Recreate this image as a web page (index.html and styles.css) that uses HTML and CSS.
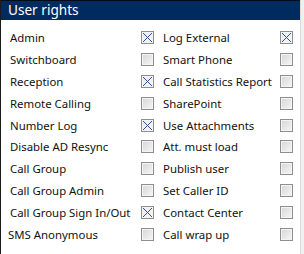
FILE: index.html
```html
<!DOCTYPE html>
<html lang="en">
<head>
    <meta charset="UTF-8">
    <title>User rights</title>
    <link rel="stylesheet" href="styles.css">
</head>
<body>
    <div class="window">
        <div class="panel">
            <div class="panel-header">User rights</div>
            <div class="rights">
                <span class="label">Admin</span><span class="box checked"></span>
                <span class="label right">Log External</span><span class="box checked"></span>

                <span class="label">Switchboard</span><span class="box"></span>
                <span class="label right">Smart Phone</span><span class="box"></span>

                <span class="label">Reception</span><span class="box checked"></span>
                <span class="label right">Call Statistics Report</span><span class="box"></span>

                <span class="label">Remote Calling</span><span class="box"></span>
                <span class="label right">SharePoint</span><span class="box"></span>

                <span class="label">Number Log</span><span class="box checked"></span>
                <span class="label right">Use Attachments</span><span class="box"></span>

                <span class="label">Disable AD Resync</span><span class="box"></span>
                <span class="label right">Att. must load</span><span class="box"></span>

                <span class="label">Call Group</span><span class="box"></span>
                <span class="label right">Publish user</span><span class="box"></span>

                <span class="label">Call Group Admin</span><span class="box"></span>
                <span class="label right">Set Caller ID</span><span class="box"></span>

                <span class="label">Call Group Sign In/Out</span><span class="box checked"></span>
                <span class="label right">Contact Center</span><span class="box"></span>

                <span class="label sms">SMS Anonymous</span><span class="box"></span>
                <span class="label right">Call wrap up</span><span class="box"></span>
            </div>
        </div>
        <div class="edge"></div>
    </div>
</body>
</html>
```

FILE: styles.css
```css
body {
    margin: 0;
    font-family: "Noto Sans", "Open Sans", sans-serif;
    background: #fff;
}

.window {
    display: flex;
    width: 304px;
    height: 254px;
    overflow: hidden;
}

.panel {
    width: 300px;
    border-left: 1px solid #1a1a1a;
    box-sizing: border-box;
}

.panel-header {
    height: 20px;
    background: #002b5e;
    border-top: 1px solid #000c1e;
    box-sizing: border-box;
    color: #fff;
    font-size: 13.6px;
    line-height: 17px;
    padding-left: 7px;
}

.rights {
    display: grid;
    grid-template-columns: 131px 21px 118px 13px;
    grid-auto-rows: 21.8px;
    align-items: center;
    padding: 7px 0 0 9px;
}

.label {
    font-size: 11.4px;
    color: #111;
    white-space: nowrap;
}

.label.right {
    padding-left: 1px;
}

.label.sms {
    margin-left: -2px;
}

.box {
    width: 13px;
    height: 13px;
    box-sizing: border-box;
    border: 1px solid #8e8e8e;
    box-shadow: inset 0 0 0 1px #f4f4f4;
    background: linear-gradient(135deg, #d6d6d6, #f6f6f6);
}

.box.checked {
    background:
        linear-gradient(45deg, transparent 47%, #3a4ea0 47%, #3a4ea0 53%, transparent 53%),
        linear-gradient(-45deg, transparent 47%, #3a4ea0 47%, #3a4ea0 53%, transparent 53%),
        linear-gradient(135deg, #e4e8f0, #f8f8f8);
}

.edge {
    width: 4px;
    background: #f0f0f0;
    border-left: 1px solid #dadada;
    box-sizing: border-box;
}
```
